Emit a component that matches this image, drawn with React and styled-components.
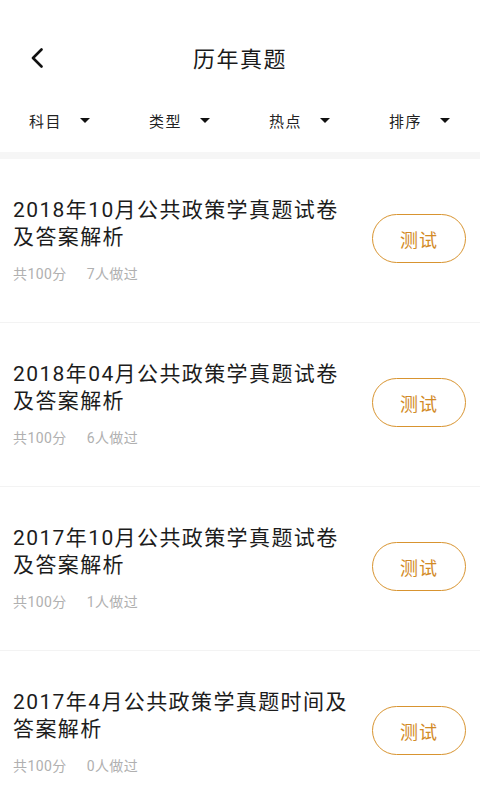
import React from 'react';
import styled, { createGlobalStyle } from 'styled-components';

const papers = [
  { id: 1, title: '2018年10月公共政策学真题试卷及答案解析', score: 100, done: 7 },
  { id: 2, title: '2018年04月公共政策学真题试卷及答案解析', score: 100, done: 6 },
  { id: 3, title: '2017年10月公共政策学真题试卷及答案解析', score: 100, done: 1 },
  { id: 4, title: '2017年4月公共政策学真题时间及答案解析', score: 100, done: 0 },
];

const filters = ['科目', '类型', '热点', '排序'];

const GlobalStyle = createGlobalStyle`
  html, body {
    margin: 0;
    padding: 0;
    background: #fff;
  }
  body {
    font-family: Roboto, "Noto Sans CJK SC", sans-serif;
    color: #222;
  }
`;

const BackIcon = () => (
  <svg width="14" height="20" viewBox="0 0 14 20" fill="none">
    <path d="M11.5 1.5L3 10l8.5 8.5" stroke="#111" strokeWidth="2.6" strokeLinecap="round" strokeLinejoin="round" />
  </svg>
);

const App = () => {
  return (
    <Page>
      <GlobalStyle />
      <NavBar>
        <BackButton><BackIcon /></BackButton>
        <NavTitle>历年真题</NavTitle>
      </NavBar>

      <FilterBar>
        {filters.map((f) => (
          <FilterItem key={f}>
            <span>{f}</span>
            <Caret />
          </FilterItem>
        ))}
      </FilterBar>

      <Divider />

      <List>
        {papers.map((p) => (
          <PaperRow key={p.id}>
            <PaperInfo>
              <PaperTitle>{p.title}</PaperTitle>
              <PaperMeta>
                <span>共{p.score}分</span>
                <span>{p.done}人做过</span>
              </PaperMeta>
            </PaperInfo>
            <TestButton>测试</TestButton>
          </PaperRow>
        ))}
      </List>
    </Page>
  );
};

const Page = styled.div`
  width: 480px;
  min-height: 800px;
  background: #fff;
  overflow: hidden;
`;

const NavBar = styled.div`
  position: relative;
  height: 64px;
  padding-top: 28px;
  display: flex;
  align-items: center;
  justify-content: center;
`;

const BackButton = styled.div`
  position: absolute;
  left: 30px;
  top: 48px;
  width: 14px;
  height: 20px;
  display: flex;
`;

const NavTitle = styled.h1`
  margin: 0;
  font-size: 22px;
  font-weight: 400;
  letter-spacing: 1.5px;
  color: #1a1a1a;
  line-height: 30px;
`;

const FilterBar = styled.div`
  display: grid;
  grid-template-columns: repeat(4, 1fr);
  height: 56px;
  padding-bottom: 4px;
`;

const FilterItem = styled.div`
  display: flex;
  align-items: center;
  padding-left: 29px;
  gap: 18px;
  font-size: 15px;
  letter-spacing: 1.5px;
  color: #222;
`;

const Caret = styled.i`
  width: 0;
  height: 0;
  border-left: 5.5px solid transparent;
  border-right: 5.5px solid transparent;
  border-top: 5.5px solid #111;
  margin-top: 1px;
`;

const Divider = styled.div`
  height: 7px;
  background: #f6f6f6;
`;

const List = styled.div`
  display: flex;
  flex-direction: column;
`;

const PaperRow = styled.div`
  display: flex;
  align-items: center;
  justify-content: space-between;
  padding: 38px 14px 37px 13px;
  border-bottom: 1px solid #f3f3f3;
`;

const PaperInfo = styled.div`
  display: flex;
  flex-direction: column;
  gap: 13px;
  width: 345px;
`;

const PaperTitle = styled.div`
  font-size: 21px;
  line-height: 27px;
  letter-spacing: 1.4px;
  color: #1c1c1c;
`;

const PaperMeta = styled.div`
  display: flex;
  gap: 20px;
  font-size: 14px;
  line-height: 21px;
  letter-spacing: 0.4px;
  color: #b0b0b0;
`;

const TestButton = styled.button`
  width: 94px;
  height: 49px;
  margin-top: -5px;
  border: 1.5px solid #d89430;
  border-radius: 25px;
  background: #fff;
  color: #d28a26;
  font-family: inherit;
  font-size: 18px;
  letter-spacing: 1px;
  padding: 0;
  flex-shrink: 0;
`;

export default App;
